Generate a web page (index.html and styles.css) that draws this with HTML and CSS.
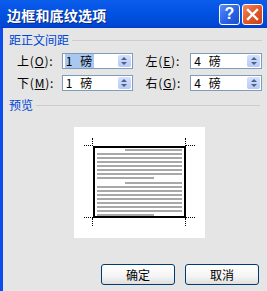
FILE: index.html
```html
<!DOCTYPE html>
<html lang="zh-CN">
<head>
    <meta charset="UTF-8">
    <title>边框和底纹选项</title>
    <link rel="stylesheet" href="styles.css">
</head>
<body>
    <div class="window">
        <div class="titlebar">
            <span class="title">边框和底纹选项</span>
            <div class="caption-buttons">
                <div class="cap-btn help">?</div>
                <div class="cap-btn close">
                    <svg width="13" height="13" viewBox="0 0 13 13">
                        <path d="M2 2 L11 11 M11 2 L2 11" stroke="#fff" stroke-width="2.4" stroke-linecap="square"/>
                    </svg>
                </div>
            </div>
        </div>

        <div class="client">
            <div class="group-head">
                <span class="group-title">距正文间距</span>
                <span class="group-line"></span>
            </div>

            <div class="row first">
                <label class="field-label">上(<u>O</u>):</label>
                <div class="spin-box">
                    <span class="value selected">1 磅</span>
                    <span class="spinner"><i class="up"></i><i class="down"></i></span>
                </div>
                <label class="field-label second">左(<u>E</u>):</label>
                <div class="spin-box wide">
                    <span class="value">4 磅</span>
                    <span class="spinner"><i class="up"></i><i class="down"></i></span>
                </div>
            </div>
            <div class="row">
                <label class="field-label">下(<u>M</u>):</label>
                <div class="spin-box">
                    <span class="value">1 磅</span>
                    <span class="spinner"><i class="up"></i><i class="down"></i></span>
                </div>
                <label class="field-label second">右(<u>G</u>):</label>
                <div class="spin-box wide">
                    <span class="value">4 磅</span>
                    <span class="spinner"><i class="up"></i><i class="down"></i></span>
                </div>
            </div>

            <div class="group-head preview-head">
                <span class="group-title">预览</span>
                <span class="group-line"></span>
            </div>

            <div class="preview">
                <div class="sheet">
                    <span class="mark tl-h"></span><span class="mark tl-v"></span>
                    <span class="mark tr-h"></span><span class="mark tr-v"></span>
                    <span class="mark bl-h"></span><span class="mark bl-v"></span>
                    <span class="mark br-h"></span><span class="mark br-v"></span>
                    <div class="page">
                        <div class="para">
                            <div class="ln indent"></div>
                            <div class="ln"></div>
                            <div class="ln"></div>
                            <div class="ln"></div>
                            <div class="ln"></div>
                            <div class="ln"></div>
                            <div class="ln"></div>
                            <div class="ln short"></div>
                        </div>
                        <div class="para">
                            <div class="ln indent"></div>
                            <div class="ln"></div>
                            <div class="ln"></div>
                            <div class="ln"></div>
                            <div class="ln"></div>
                            <div class="ln"></div>
                            <div class="ln"></div>
                            <div class="ln"></div>
                            <div class="ln short"></div>
                        </div>
                    </div>
                </div>
            </div>

            <div class="buttons">
                <button class="btn">确定</button>
                <button class="btn">取消</button>
            </div>
        </div>
    </div>
</body>
</html>
```

FILE: styles.css
```css
body {
    margin: 0;
    font-family: "Noto Sans CJK SC", "Liberation Sans", sans-serif;
    font-size: 12px;
    background: #e5e5e5;
}
.window {
    width: 267px;
    height: 291px;
    overflow: hidden;
    display: flex;
    flex-direction: column;
}
.titlebar {
    height: 28px;
    flex: none;
    display: flex;
    align-items: center;
    padding-left: 7px;
    background: linear-gradient(to bottom, #0a5fe8 0%, #0a58ea 15%, #0052e0 50%, #0049d8 85%, #003ec8 100%);
}
.title {
    color: #fff;
    font-size: 14px;
    font-weight: bold;
    letter-spacing: 0.2px;
    text-shadow: 1px 1px 0 #0a2a80;
    margin-top: 1px;
}
.caption-buttons {
    margin-left: auto;
    margin-right: 4px;
    display: flex;
    gap: 2px;
}
.cap-btn {
    width: 19px;
    height: 19px;
    border: 1px solid #fff;
    border-radius: 3px;
    display: flex;
    align-items: center;
    justify-content: center;
    color: #fff;
    font-family: "Liberation Sans", sans-serif;
    font-weight: bold;
    font-size: 16px;
}
.help {
    background: linear-gradient(to bottom right, #5a8cf6 0%, #2a62e4 55%, #1a4cd0 100%);
}
.close {
    background: linear-gradient(to bottom right, #f08a60 0%, #e25828 50%, #c8401a 100%);
}
.client {
    flex: 1;
    background: #e5e5e5;
    border-left: 3px solid #0a4cee;
    padding: 0 5px 0 6px;
}
.group-head {
    margin-top: 4px;
    height: 16px;
    display: flex;
    align-items: center;
}
.group-title {
    color: #0046d5;
    line-height: 16px;
}
.group-line {
    flex: 1;
    margin-left: 3px;
    border-top: 1px solid #cdcdcd;
    margin-top: 1px;
}
.preview-head {
    margin-top: 6px;
    margin-right: 2px;
}
.row {
    display: flex;
    align-items: center;
    height: 16px;
    margin-top: 6px;
    padding-left: 8px;
}
.row.first {
    margin-top: 5px;
}
.field-label {
    width: 45px;
    line-height: 16px;
    color: #000;
    letter-spacing: 0.8px;
}
.field-label.second {
    margin-left: 13px;
}
.spin-box {
    width: 67px;
    height: 14px;
    border: 1px solid #7f9db9;
    background: #fff;
    display: flex;
    align-items: center;
    padding-left: 2px;
    box-sizing: content-box;
}
.spin-box.wide {
    width: 68px;
}
.value {
    line-height: 14px;
    padding: 0 1px;
    word-spacing: 5px;
}
.value.selected {
    background: #a9c7f0;
    padding-right: 2px;
}
.spinner {
    margin-left: auto;
    margin-right: 1px;
    width: 13px;
    height: 12px;
    border-radius: 2px;
    background: linear-gradient(to bottom, #d4e0fd, #b6c9f8);
    display: flex;
    flex-direction: column;
    align-items: center;
    justify-content: center;
    gap: 2px;
}
.spinner i {
    width: 0;
    height: 0;
    border-left: 3px solid transparent;
    border-right: 3px solid transparent;
}
.spinner .up {
    border-bottom: 3px solid #4d6185;
}
.spinner .down {
    border-top: 3px solid #4d6185;
}
.preview {
    margin-top: 14px;
    margin-left: 65px;
    width: 131px;
    height: 111px;
    background: #fff;
    box-sizing: border-box;
    padding: 19px 0 0 19px;
}
.sheet {
    position: relative;
    width: 93px;
    height: 72px;
}
.page {
    box-sizing: border-box;
    width: 93px;
    height: 72px;
    border: 2px solid #000;
    padding: 1px 2px 0 2px;
    overflow: hidden;
}
.para + .para {
    margin-top: 3px;
}
.ln {
    height: 2px;
    margin-bottom: 2px;
    background: #a8a8a8;
}
.ln.indent {
    margin-left: 28px;
}
.ln.short {
    margin-right: 28px;
}
.mark {
    position: absolute;
}
.tl-h, .tr-h, .bl-h, .br-h {
    width: 9px;
    height: 0;
    border-top: 1px dotted #000;
}
.tl-v, .tr-v, .bl-v, .br-v {
    width: 0;
    height: 8px;
    border-left: 1px dotted #000;
}
.tl-h { left: -9px; top: -1px; }
.tl-v { left: -1px; top: -8px; }
.tr-h { right: -9px; top: -1px; }
.tr-v { right: 0; top: -8px; }
.bl-h { left: -9px; bottom: 0; }
.bl-v { left: -1px; bottom: -8px; }
.br-h { right: -9px; bottom: 0; }
.br-v { right: 0; bottom: -8px; }
.buttons {
    margin-top: 26px;
    display: flex;
    justify-content: flex-end;
    gap: 10px;
    padding-right: 3px;
}
.btn {
    width: 74px;
    height: 21px;
    border: 1px solid #003c74;
    border-radius: 3px;
    background: linear-gradient(to bottom, #ffffff 0%, #f4f4f4 60%, #dedede 100%);
    font-family: "Noto Sans CJK SC", sans-serif;
    font-size: 12px;
    color: #000;
    padding: 0;
}
```
